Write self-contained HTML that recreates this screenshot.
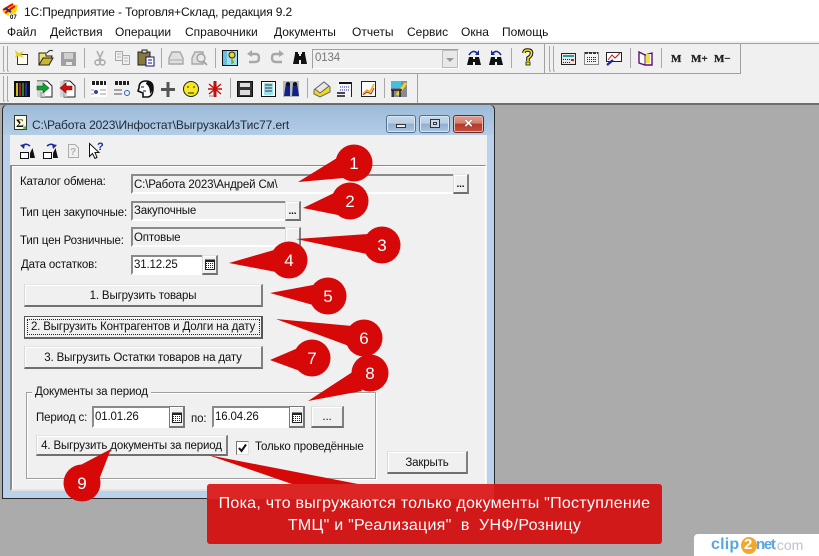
<!DOCTYPE html>
<html><head><meta charset="utf-8">
<style>
html,body{margin:0;padding:0;width:819px;height:556px;overflow:hidden;background:#ababab;}
*{box-sizing:border-box;}
body{position:relative;font-family:"Liberation Sans",sans-serif;font-size:12px;color:#111;}
.a{position:absolute;white-space:nowrap;}
.t{position:absolute;white-space:nowrap;line-height:14px;}
.m{font-size:11.5px;letter-spacing:-.15px;}
.f{position:absolute;background:#f0f0f0;border-top:2px solid #8a8a8a;border-left:2px solid #8a8a8a;border-right:1px solid #fff;border-bottom:2px solid #fff;}
.w{background:#fff;}
.b{position:absolute;background:#f0f0f0;border-right:2px solid #808080;border-bottom:2px solid #707070;border-top:1px solid #e4e4e4;border-left:1px solid #d8d8d8;box-shadow:inset 1px 1px 0 #fff;text-align:center;white-space:nowrap;font-size:11.5px;letter-spacing:-.15px;}
.wb{position:absolute;top:115px;height:18px;border:1px solid #54708e;border-radius:3px;background:linear-gradient(#c6d8ea 0,#b8cee4 45%,#8fb0d1 50%,#a9c5df 100%);box-shadow:inset 0 0 0 1px #dbe7f2;}
</style></head><body>
<!-- app chrome -->
<div class="a" style="left:0;top:0;width:819px;height:41px;background:#fff"></div>
<div class="a" style="left:0;top:41px;width:819px;height:64px;background:#f0f0f0"></div>
<div class="a" style="left:0;top:43px;width:819px;height:1px;background:#a0a0a0"></div>
<div class="a" style="left:0;top:73px;width:740px;height:1px;background:#a0a0a0"></div>
<div class="a" style="left:740px;top:44px;width:1px;height:30px;background:#a0a0a0"></div>
<div class="a" style="left:417px;top:74px;width:1px;height:29px;background:#a0a0a0"></div>
<div class="a" style="left:544px;top:44px;width:1px;height:29px;background:#a0a0a0"></div>
<div class="a" style="left:0;top:103px;width:819px;height:2px;background:#6e6e6e"></div>

<svg class="a" style="left:0;top:0" width="819" height="105" viewBox="0 0 819 105">
<!-- app icon -->
<path d="M2 11L10 4L18 5L16 13L8 16Z" fill="#ffd800"/><path d="M3 10L13 4M5 13L15 6" stroke="#e01010" stroke-width="2"/><path d="M5 8L11 12" stroke="#2020c0" stroke-width="2"/><rect x="9" y="14" width="9" height="5" fill="#fff"/>
<text x="10" y="19" font-size="6" font-weight="bold" font-family="Liberation Sans">07</text>
<!-- grips -->
<g fill="none" stroke="#a8a8a8"><path d="M3.5 46V71H5M7.5 46V71H9"/><path d="M3.5 76V101H5M7.5 76V101H9"/><path d="M549.5 46V71H551M553.5 46V71H555"/></g>
<!-- separators -->
<g stroke="#a8a8a8"><path d="M84.5 48V68M161.5 48V68M215.5 48V68M511.5 48V68M630.5 48V68M661.5 48V68M84.5 78V98M230.5 78V98M307.5 78V98M384.5 78V98"/></g>
<!-- new -->
<path d="M17.5 54.5H27.5V64.5H17.5Z" fill="#fffff0" stroke="#333"/><path d="M15 50L19 53L24 51L21 55L25 58L18 56L15 58L16 55Z" fill="#e8d030"/>
<!-- open -->
<path d="M39 53H46V56H52L49 65H39Z" fill="#f0e070" stroke="#222"/><path d="M39 65L43 58H53L49 65Z" fill="#c8b830" stroke="#222"/><path d="M47 53Q50 49 53 51" fill="none" stroke="#222"/>
<!-- save -->
<rect x="61" y="52" width="15" height="14" fill="#a0a0a0"/><rect x="64" y="53" width="9" height="6" fill="#d0d0d0"/><rect x="66" y="62" width="6" height="3" fill="#e8e8e8"/>
<!-- cut -->
<path d="M97 51L101 60M103 51L99 60" stroke="#b0b0b0" stroke-width="1.6"/><circle cx="97.5" cy="62.5" r="2.5" fill="none" stroke="#a8a8a8" stroke-width="1.4"/><circle cx="102.5" cy="62.5" r="2.5" fill="none" stroke="#a8a8a8" stroke-width="1.4"/>
<!-- copy -->
<path d="M115.5 51.5H122.5V60.5H115.5ZM122.5 55.5H129.5V64.5H122.5Z" fill="#f0f0f0" stroke="#a8a8a8"/><path d="M117 54H121M117 57H121M124 58H128M124 61H128" stroke="#b8b8b8"/>
<!-- paste -->
<rect x="138" y="52" width="12" height="13" fill="#8a7a3a" stroke="#222"/><rect x="142" y="50" width="5" height="3" fill="#e0e0e0" stroke="#222"/><rect x="146" y="57" width="8" height="9" fill="#fff" stroke="#10107a"/><path d="M148 60H152M148 63H152" stroke="#10107a"/>
<!-- print/preview -->
<path d="M169 58L172 52H180L183 58V64H169Z" fill="#e0e0e0" stroke="#a8a8a8" stroke-width="1.4"/><path d="M170 60H182" stroke="#a8a8a8"/>
<path d="M192 58L195 52H203V58V64H192Z" fill="#e0e0e0" stroke="#a8a8a8" stroke-width="1.4"/><circle cx="201" cy="58" r="4" fill="#e8e8e8" stroke="#a0a0a0" stroke-width="1.4"/><path d="M203 61L207 65" stroke="#a0a0a0" stroke-width="1.6"/>
<!-- key -->
<rect x="222.5" y="50.5" width="15" height="15" fill="#9ae0ee" stroke="#111"/><rect x="223" y="51" width="4" height="14" fill="#6ac0e0"/><circle cx="232" cy="55" r="3" fill="#f0d820" stroke="#222"/><path d="M232 58V64M232 62H234" stroke="#a09010" stroke-width="1.4"/>
<!-- undo redo -->
<path d="M249 54H256Q259 54 259 58Q259 62 255 62H249" fill="none" stroke="#a8a8a8" stroke-width="2.4"/><path d="M252 50V57L247 54Z" fill="#a8a8a8"/>
<path d="M282 54H275Q272 54 272 58Q272 62 276 62H282" fill="none" stroke="#a8a8a8" stroke-width="2.4"/><path d="M279 50V57L284 54Z" fill="#a8a8a8"/>
<!-- binoculars -->
<g fill="#111"><path d="M293 64L295 54H299V64ZM301 64V54H305L307 64ZM299 56H301V60H299Z"/><rect x="295" y="52" width="3" height="2"/><rect x="302" y="52" width="3" height="2"/></g>
<g fill="#111"><path d="M467 65L469 57H473V65ZM475 65V57H479L481 65ZM473 59H475V62H473Z"/><path d="M489 65L491 57H495V65ZM497 65V57H501L503 65ZM495 59H497V62H495Z"/></g>
<path d="M469 55Q473 49 477 53" fill="none" stroke="#1a2a9a" stroke-width="1.6"/><path d="M477 50V55H473Z" fill="#1a2a9a" transform="translate(2,0)"/>
<path d="M501 55Q497 49 493 53" fill="none" stroke="#1a2a9a" stroke-width="1.6"/><path d="M491 50V55H495Z" fill="#1a2a9a"/>
<!-- ? -->
<path d="M524 53Q524 50 527.500 50Q531.500 50 531.500 53Q531.500 56 528 58V61" fill="none" stroke="#111" stroke-width="3.6"/><path d="M524 53Q524 50 527.500 50Q531.500 50 531.500 53Q531.500 56 528 58V61" fill="none" stroke="#f5e820" stroke-width="1.6"/><rect x="526" y="62" width="4" height="3" fill="#f5e820" stroke="#111" stroke-width=".8"/>
<!-- calc, calendar, chart -->
<rect x="561.500" y="53.500" width="14" height="11" fill="#e8e8e8" stroke="#222"/><rect x="563" y="55" width="11" height="2" fill="#20a0a0"/><path d="M563 59.500H570M563 62.500H570" stroke="#222" stroke-dasharray="1 1"/><rect x="571" y="59" width="3" height="2" fill="#d02020"/>
<rect x="584.500" y="52.500" width="14" height="12" fill="#f4f4f4" stroke="#888"/><path d="M585 53H598" stroke="#333" stroke-dasharray="3 1" stroke-width="2"/><path d="M587 57.500H596M587 59.500H596M587 61.500H596" stroke="#222" stroke-dasharray="1 1"/><path d="M595 57V63" stroke="#e01010" stroke-dasharray="1 1"/>
<rect x="606.500" y="52.500" width="15" height="9" fill="#fff" stroke="#222"/><path d="M608 60L612 55L615 58L620 53" fill="none" stroke="#d01010"/><path d="M607 65L613 60" stroke="#1a2aa0" stroke-width="2.4"/>
<!-- book -->
<path d="M639 52L645 55L652 53V65H645L639 63Z" fill="#fff" stroke="#5a1070" stroke-width="1.4"/><path d="M645 55V65" stroke="#5a1070"/><rect x="646" y="54" width="4" height="9" fill="#f0e050"/>
<!-- M -->
<g font-family="Liberation Serif" font-weight="bold" font-size="11" fill="#222" stroke="#222" stroke-width=".3"><text x="671" y="62">M</text><text x="691" y="62">M+</text><text x="714" y="62">M−</text></g>
<!-- row 2 -->
<rect x="14" y="81" width="16" height="16" fill="#111"/><path d="M17 83V96" stroke="#e8d020" stroke-width="1.8"/><path d="M20 83V96" stroke="#c02020" stroke-width="1.800"/><path d="M23 83V96" stroke="#209030" stroke-width="1.800"/><path d="M26 83V96" stroke="#2030c0" stroke-width="1.800"/>
<path d="M37 81H47L52 86V97H41V92" fill="#fff" stroke="#222"/><rect x="37" y="81" width="8" height="16" fill="#c8c8c8" opacity=".7"/><path d="M37 86H43V83L49 88L43 93V90H37Z" fill="#10a030" stroke="#0a6020" stroke-width=".6"/>
<path d="M64 81H70L75 86V97H64Z" fill="#fff" stroke="#222"/><rect x="60" y="81" width="7" height="16" fill="#c8c8c8" opacity=".7"/><path d="M72 86H66V83L60 88L66 93V90H72Z" fill="#d01010" stroke="#801010" stroke-width=".6"/>
<rect x="91" y="81" width="16" height="16" fill="#fff"/><path d="M92 83H106" stroke="#222" stroke-width="4" stroke-dasharray="3 1"/><circle cx="96" cy="92" r="2" fill="#3040b0"/><path d="M100 90H106M100 94H106M91 90H94M91 94H94" stroke="#999"/>
<rect x="114" y="81" width="16" height="16" fill="#f0f0f0"/><path d="M115 83H129" stroke="#222" stroke-width="4" stroke-dasharray="3 1"/><path d="M114 90H122M114 94H122" stroke="#555"/><circle cx="127" cy="93" r="2.500" fill="none" stroke="#3060c0"/>
<path d="M139 88Q139 81 146 81Q153 81 153 88Q153 96 148 97H143V93L138 91Z" fill="#fff" stroke="#111" stroke-width="1.600"/><path d="M147 81Q153 82 153 90L150 94Q150 86 146 84Z" fill="#111"/><path d="M141 87H144M143 91H146" stroke="#111"/>
<path d="M168 82V97M161 89.500H175" stroke="#555" stroke-width="3"/>
<circle cx="191" cy="89" r="7.500" fill="#f5e820" stroke="#222"/><path d="M187 87H189M193 87H195M188 93H194" stroke="#222"/>
<path d="M215 81V97" stroke="#c01010" stroke-width="3"/><path d="M209 84L221 94M221 84L209 94M208 89H222" stroke="#c01010" stroke-width="1.400"/><path d="M209 96H213" stroke="#888"/>
<rect x="237.500" y="81.500" width="15" height="15" fill="#333" stroke="#111"/><rect x="240" y="83" width="10" height="4" fill="#ddd"/><rect x="240" y="90" width="10" height="5" fill="#ddd"/>
<rect x="261.500" y="81.500" width="14" height="15" fill="#fff" stroke="#111"/><rect x="264" y="83" width="9" height="12" fill="#9ae0ee"/><path d="M265 85H272M265 88H272M265 91H272" stroke="#333"/>
<rect x="283" y="81" width="16" height="16" fill="#b8b8b8"/><path d="M286 83H290V96H284ZM293 83H297L299 96H292Z" fill="#12208a"/><circle cx="288" cy="84" r="2" fill="#111"/><circle cx="295" cy="84" r="2" fill="#111"/>
<path d="M314 90L324 82L330 87V92L320 97L314 94Z" fill="#f0d820" stroke="#666"/><path d="M315 89L324 82L329 86L320 93Z" fill="#e8e8e8" stroke="#666"/>
<rect x="337" y="81" width="15" height="16" fill="#f4f4f4"/><path d="M339 83H351" stroke="#111" stroke-width="2"/><path d="M340 87H350M340 90H350" stroke="#2030a0" stroke-dasharray="1 1"/><path d="M337 93H345M337 96H345" stroke="#111" stroke-width="1.400"/><path d="M351.500 82V97" stroke="#222"/>
<rect x="361.500" y="81.500" width="14" height="15" fill="#fff" stroke="#222"/><path d="M363 94L367 90L370 92L374 84" fill="none" stroke="#e8b010" stroke-width="1.600"/><path d="M363 95L367 92L371 94L374 88" fill="none" stroke="#d02020"/>
<rect x="391" y="81" width="16" height="16" fill="#889"/><rect x="391" y="81" width="10" height="8" fill="#40c0e0"/><path d="M397 95L406 83" stroke="#e8d820" stroke-width="3"/><path d="M391 90H402M393 90V97M400 90V97" stroke="#222" stroke-width="1.600"/><path d="M391 89H401" stroke="#c03030"/>
</svg>

<div class="t" style="left:24px;top:5px;font-size:12px;letter-spacing:-.13px">1С:Предприятие - Торговля+Склад, редакция 9.2</div>
<div class="t" style="left:7px;top:25px">Файл</div>
<div class="t" style="left:50px;top:25px">Действия</div>
<div class="t" style="left:115px;top:25px">Операции</div>
<div class="t" style="left:185px;top:25px">Справочники</div>
<div class="t" style="left:274px;top:25px">Документы</div>
<div class="t" style="left:352px;top:25px">Отчеты</div>
<div class="t" style="left:407px;top:25px">Сервис</div>
<div class="t" style="left:461px;top:25px">Окна</div>
<div class="t" style="left:502px;top:25px">Помощь</div>

<!-- combo -->
<div class="a" style="left:312px;top:49px;width:147px;height:20px;background:#f0f0f0;border:1px solid #a0a0a0;border-right-color:#fff;border-bottom-color:#fff"></div>
<div class="t m" style="left:315px;top:51px;color:#777">0134</div>
<div class="a" style="left:442px;top:50px;width:16px;height:18px;background:#e8e8e8;border:1px solid #bbb"></div>
<div class="a" style="left:446px;top:58px;width:0;height:0;border-left:4px solid transparent;border-right:4px solid transparent;border-top:4px solid #999"></div>

<!-- window -->
<div class="a" style="left:2px;top:104px;width:493px;height:395px;background:#b9d1ea;border:1px solid #2a2a2a;border-top-color:#6a6a6a;border-radius:6px 6px 0 0"></div>
<div class="a" style="left:3px;top:105px;width:491px;height:30px;background:linear-gradient(#9cbad8,#b4cde6);border-radius:5px 5px 0 0"></div>
<div class="a" style="left:10px;top:135px;width:477px;height:356px;background:#f0f0f0"></div>
<div class="a" style="left:10px;top:165px;width:476px;height:326px;border-top:1px solid #8a8a8a;border-left:2px solid #8a8a8a;border-right:1px solid #fff;border-bottom:2px solid #e2e2e2;box-shadow:inset 1px 1px 0 #fff"></div>

<svg class="a" style="left:14px;top:115px" width="14" height="16" viewBox="0 0 14 16"><rect x=".5" y=".5" width="12" height="14" fill="#fffde0" stroke="#333"/><text x="2" y="12" font-size="12" font-weight="bold" font-family="Liberation Serif" fill="#111">Σ</text><path d="M9 13H13M11 11V15" stroke="#10a030"/></svg>
<div class="t" style="left:32px;top:118px;color:#1c2a3a;letter-spacing:-.12px">C:\Работа 2023\Инфостат\ВыгрузкаИзТис77.ert</div>
<div class="wb" style="left:386px;width:30px"><div class="a" style="left:9px;top:8px;width:10px;height:4px;background:#e8eef5;border:1px solid #333"></div></div>
<div class="wb" style="left:419px;width:31px"><div class="a" style="left:10px;top:3px;width:10px;height:9px;border:1px solid #333;background:#c8d8e8"><div class="a" style="left:2px;top:2px;width:4px;height:3px;background:#e8eef5;border:1px solid #333"></div></div></div>
<div class="wb" style="left:453px;width:31px;border-color:#6a2a2a;background:linear-gradient(#e0a090 0,#d08070 45%,#b83828 50%,#c05040 100%);box-shadow:inset 0 0 0 1px #e8b8a8"></div>
<div class="t" style="left:453px;top:115px;width:31px;height:18px;text-align:center;font-weight:bold;font-size:15px;line-height:17px;color:#fff;text-shadow:0 0 1px #333">×</div>

<svg class="a" style="left:0;top:135px" width="120" height="30" viewBox="0 0 120 30">
<g fill="none" stroke="#111"><rect x="20.500" y="17.500" width="8" height="6" fill="#fff"/><rect x="43.500" y="17.500" width="8" height="6" fill="#fff"/></g>
<path d="M30 18L32.500 13L35 23H30ZM53 18L55.500 13L58 23H53Z" fill="#111"/>
<path d="M22 12Q25 7 30 11" fill="none" stroke="#1a2a9a" stroke-width="1.500"/><path d="M20 10L25 9L24 14Z" fill="#1a2a9a"/>
<path d="M55 12Q52 7 47 11" fill="none" stroke="#1a2a9a" stroke-width="1.500"/><path d="M57 10L52 9L53 14Z" fill="#1a2a9a"/>
<path d="M68.500 9.500H75L78.500 13V22.500H68.500Z" fill="#f0f0f0" stroke="#aaa"/><text x="70" y="20" font-size="10" font-weight="bold" fill="#b0b0b0" font-family="Liberation Sans">?</text>
<path d="M89.500 8.500V21.500L92.500 18.500L95 23.500L97 22.500L95 17.500L99 17.500Z" fill="#fff" stroke="#111"/>
<text x="97" y="15" font-size="11" font-weight="bold" fill="#1a2a9a" font-family="Liberation Sans">?</text>
</svg>

<!-- form -->
<div class="t m" style="left:20px;top:175px">Каталог обмена:</div>
<div class="f" style="left:131px;top:174px;width:323px;height:20px"></div>
<div class="t m" style="left:134px;top:178px">C:\Работа 2023\Андрей См\</div>
<div class="b" style="left:453px;top:174px;width:16px;height:20px;line-height:20px;font-weight:bold;font-size:10px">...</div>

<div class="t m" style="left:20px;top:206px">Тип цен закупочные:</div>
<div class="f" style="left:131px;top:201px;width:155px;height:20px"></div>
<div class="t m" style="left:134px;top:204px">Закупочные</div>
<div class="b" style="left:285px;top:201px;width:16px;height:20px;line-height:20px;font-weight:bold;font-size:10px">...</div>

<div class="t m" style="left:20px;top:234px">Тип цен Розничные:</div>
<div class="f" style="left:131px;top:227px;width:155px;height:20px"></div>
<div class="t m" style="left:134px;top:231px">Оптовые</div>
<div class="b" style="left:285px;top:227px;width:16px;height:20px"></div>

<div class="t m" style="left:21px;top:258px">Дата остатков:</div>
<div class="f w" style="left:131px;top:255px;width:72px;height:20px"></div>
<div class="t m" style="left:134px;top:258px">31.12.25</div>
<div class="b" style="left:202px;top:255px;width:16px;height:20px"></div>
<svg class="a" style="left:204px;top:258px" width="12" height="13" viewBox="0 0 12 13"><rect x="1.500" y="3.500" width="9" height="8" fill="#fff" stroke="#222"/><path d="M1 2.500H11" stroke="#222" stroke-width="2"/><path d="M2 5.500H10M2 7.500H10M2 9.500H10" stroke="#222" stroke-dasharray="1 1"/></svg>

<div class="b" style="left:24px;top:284px;width:239px;height:23px;line-height:22px">1. Выгрузить товары</div>
<div class="b" style="left:24px;top:316px;width:239px;height:23px;line-height:20px;border:1px solid #555;border-right:2px solid #555;border-bottom:2px solid #666">2. Выгрузить Контрагентов и Долги на дату</div>
<div class="a" style="left:27px;top:319px;width:233px;height:16px;border:1px dotted #222"></div>
<div class="b" style="left:24px;top:346px;width:239px;height:23px;line-height:22px">3. Выгрузить Остатки товаров на дату</div>

<div class="a" style="left:26px;top:392px;width:350px;height:87px;border:1px solid #a0a0a0;box-shadow:1px 1px 0 #fff,inset 1px 1px 0 #fff"></div>
<div class="t m" style="left:32px;top:385px;background:#f0f0f0;padding:0 3px">Документы за период</div>
<div class="t m" style="left:36px;top:411px">Период с:</div>
<div class="f w" style="left:92px;top:406px;width:78px;height:22px"></div>
<div class="t m" style="left:95px;top:410px">01.01.26</div>
<div class="b" style="left:169px;top:406px;width:16px;height:22px;border-color:#777"></div>
<svg class="a" style="left:171px;top:411px" width="12" height="13" viewBox="0 0 12 13"><rect x="1.500" y="3.500" width="9" height="8" fill="#fff" stroke="#222"/><path d="M1 2.500H11" stroke="#222" stroke-width="2"/><path d="M2 5.500H10M2 7.500H10M2 9.500H10" stroke="#222" stroke-dasharray="1 1"/></svg>
<div class="t m" style="left:191px;top:412px">по:</div>
<div class="f w" style="left:212px;top:406px;width:78px;height:22px"></div>
<div class="t m" style="left:215px;top:410px">16.04.26</div>
<div class="b" style="left:289px;top:406px;width:16px;height:22px;border-color:#777"></div>
<svg class="a" style="left:291px;top:411px" width="12" height="13" viewBox="0 0 12 13"><rect x="1.500" y="3.500" width="9" height="8" fill="#fff" stroke="#222"/><path d="M1 2.500H11" stroke="#222" stroke-width="2"/><path d="M2 5.500H10M2 7.500H10M2 9.500H10" stroke="#222" stroke-dasharray="1 1"/></svg>
<div class="b" style="left:311px;top:406px;width:33px;height:22px;line-height:21px">...</div>
<div class="b" style="left:36px;top:435px;width:192px;height:21px;line-height:20px">4. Выгрузить документы за период</div>
<div class="a" style="left:236px;top:441px;width:13px;height:14px;background:#fff;border:1px solid #777;border-right-color:#ddd;border-bottom-color:#ddd"></div>
<svg class="a" style="left:237px;top:442px" width="11" height="12" viewBox="0 0 11 12"><path d="M2 6L4.500 9L9 2.500" fill="none" stroke="#111" stroke-width="2"/></svg>
<div class="t m" style="left:255px;top:440px">Только проведённые</div>
<div class="b" style="left:387px;top:451px;width:81px;height:23px;line-height:22px">Закрыть</div>

<!-- annotations -->
<svg class="a" style="left:0;top:0" width="819" height="556" viewBox="0 0 819 556">
<g fill="#d60808">
<circle cx="354" cy="163" r="18.500"/><path d="M298 182L337 158L344 178Z"/>
<circle cx="350" cy="201" r="18.500"/><path d="M303 208L334 193L338 215Z"/>
<circle cx="382" cy="245" r="18.500"/><path d="M296 239L368 234L367 254Z"/>
<circle cx="289" cy="260" r="18.500"/><path d="M229 263L274 250L276 272Z"/>
<circle cx="328" cy="296" r="18.500"/><path d="M270 293L313 285L313 305Z"/>
<circle cx="364" cy="338" r="18.500"/><path d="M276 319L352 326L349 346Z"/>
<circle cx="312" cy="358" r="18.500"/><path d="M270 360L298 348L300 371Z"/>
<circle cx="370" cy="373" r="18.500"/><path d="M308 401L354 371L362 391Z"/>
<circle cx="82" cy="483" r="18.500"/><path d="M111 449L71 470L95 490Z"/>
<path d="M208 455L358 484H292Z"/>
</g>
<g fill="#fff" font-family="Liberation Sans" font-size="17" text-anchor="middle">
<text x="354" y="169">1</text><text x="350" y="207">2</text><text x="382" y="251">3</text><text x="289" y="266">4</text><text x="328" y="302">5</text><text x="364" y="344">6</text><text x="312" y="364">7</text><text x="370" y="379">8</text><text x="82" y="489">9</text>
</g>
</svg>
<div class="a" style="left:207px;top:484px;width:455px;height:60px;background:#d11919;border-radius:3px"></div>
<div class="a" style="left:207px;top:484px;width:287px;height:15px;background:#dc2626;border-radius:3px 0 0 0"></div>
<div class="t" style="left:207px;top:495px;width:455px;text-align:center;color:#fff;font-size:16px;letter-spacing:.25px;line-height:18px">Пока, что выгружаются только документы "Поступление</div>
<div class="t" style="left:207px;top:517px;width:455px;text-align:center;color:#fff;font-size:16px;letter-spacing:.25px;line-height:18px;white-space:pre">ТМЦ" и "Реализация"  в  УНФ/Розницу</div>

<!-- clip2net -->
<div class="a" style="left:694px;top:534px;width:125px;height:22px;background:#fff;border-radius:4px 0 0 0"></div>
<div class="a" style="left:741px;top:537px;width:16px;height:17px;background:#f0a830;border-radius:50%"></div>
<div class="t" style="left:711px;top:537px;font-size:16px;line-height:16px;font-weight:bold;color:#5aa6de;letter-spacing:.2px">clip</div>
<div class="t" style="left:744px;top:537px;font-size:15px;line-height:16px;font-weight:bold;color:#fff">2</div>
<div class="t" style="left:756px;top:537px;font-size:15px;line-height:16px;font-weight:bold;color:#5aa6de;letter-spacing:-1.300px">net</div>
<div class="t" style="left:773px;top:537px;font-size:14px;line-height:16px;color:#bcc4cc">.com</div>
</body></html>
